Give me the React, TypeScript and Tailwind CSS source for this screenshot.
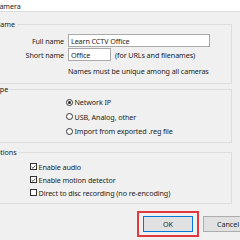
import React from "react";

const font = { fontFamily: '"Noto Sans", "Open Sans", sans-serif' };

function Radio({ checked, label }: { checked?: boolean; label: string }) {
  return (
    <div className="flex items-center h-[14.5px] pl-[79px]">
      <div className="w-[7px] h-[7px] rounded-full border border-[#333] bg-white flex items-center justify-center shrink-0">
        {checked && <div className="w-[3px] h-[3px] rounded-full bg-[#222]" />}
      </div>
      <span className="ml-[1.5px] whitespace-nowrap">{label}</span>
    </div>
  );
}

function Check({ checked, label }: { checked?: boolean; label: string }) {
  return (
    <div className="flex items-center h-[13px] pl-[43px]">
      <div className="w-[7px] h-[7px] border border-[#333] bg-white flex items-center justify-center shrink-0">
        {checked && (
          <svg width="6" height="6" viewBox="0 0 6 6">
            <path d="M0.8 3 L2.4 4.6 L5.2 1.2" stroke="#222" strokeWidth="0.9" fill="none" />
          </svg>
        )}
      </div>
      <span className="ml-[1.5px] whitespace-nowrap">{label}</span>
    </div>
  );
}

function Group({
  title,
  labelClass,
  className,
  children,
}: {
  title: string;
  labelClass: string;
  className?: string;
  children: React.ReactNode;
}) {
  return (
    <div className={"relative border border-[#dcdcdc] ml-[-14px] mr-[8px] " + (className ?? "")}>
      <span className={"absolute top-[-6px] bg-[#f0f0f0] pr-[2px] leading-[10px] whitespace-nowrap " + labelClass}>{title}</span>
      {children}
    </div>
  );
}

export default function App() {
  return (
    <div className="w-[240px] h-[240px] overflow-hidden bg-[#f0f0f0] text-[7.2px] tracking-[-0.1px] text-[#1e1e1e] leading-[10px]" style={font}>
      <div className="h-[12px] bg-white border-b border-[#dcdcdc] flex items-center ml-[-5px]">
        <span className="whitespace-nowrap">Camera</span>
      </div>
      <Group title="Name" labelClass="left-[8px]" className="mt-[12px] h-[60px]">
        <div className="pt-[9px] flex flex-col gap-[1px]">
          <div className="flex items-center h-[13px]">
            <span className="w-[77px] text-right whitespace-nowrap">Full name</span>
            <div className="ml-[4px] w-[142px] h-[13px] bg-white border border-[#aaa] flex items-center pl-[2px] whitespace-nowrap">Learn CCTV Office</div>
          </div>
          <div className="flex items-center h-[13px]">
            <span className="w-[77px] text-right whitespace-nowrap">Short name</span>
            <div className="ml-[4px] w-[43px] h-[13px] bg-white border border-[#aaa] flex items-center pl-[2px]">Office</div>
            <span className="ml-[4px] whitespace-nowrap">(for URLs and filenames)</span>
          </div>
          <div className="pl-[81px] mt-[4px] whitespace-nowrap">Names must be unique among all cameras</div>
        </div>
      </Group>
      <Group title="Type" labelClass="left-[5.5px]" className="mt-[5px] h-[54px]">
        <div className="pt-[5px]">
          <Radio checked label="Network IP" />
          <Radio label="USB, Analog, other" />
          <Radio label="Import from exported .reg file" />
        </div>
      </Group>
      <Group title="Options" labelClass="left-[3.5px]" className="mt-[9px] h-[52px]">
        <div className="pt-[7px]">
          <Check checked label="Enable audio" />
          <Check checked label="Enable motion detector" />
          <Check label="Direct to disc recording (no re-encoding)" />
        </div>
      </Group>
      <div className="flex items-start mt-[7px] pl-[137px] gap-[4px]">
        <div className="w-[62px] h-[26px] border-2 border-[#e0393e] px-[4px] pt-[3px] shrink-0">
          <div className="w-[50px] h-[16px] bg-[#e1e1e1] border border-[#0078d7] flex items-center justify-center">OK</div>
        </div>
        <div className="mt-[5px] w-[50px] h-[16px] bg-[#e1e1e1] border border-[#adadad] flex items-center justify-center shrink-0">Cancel</div>
      </div>
    </div>
  );
}
